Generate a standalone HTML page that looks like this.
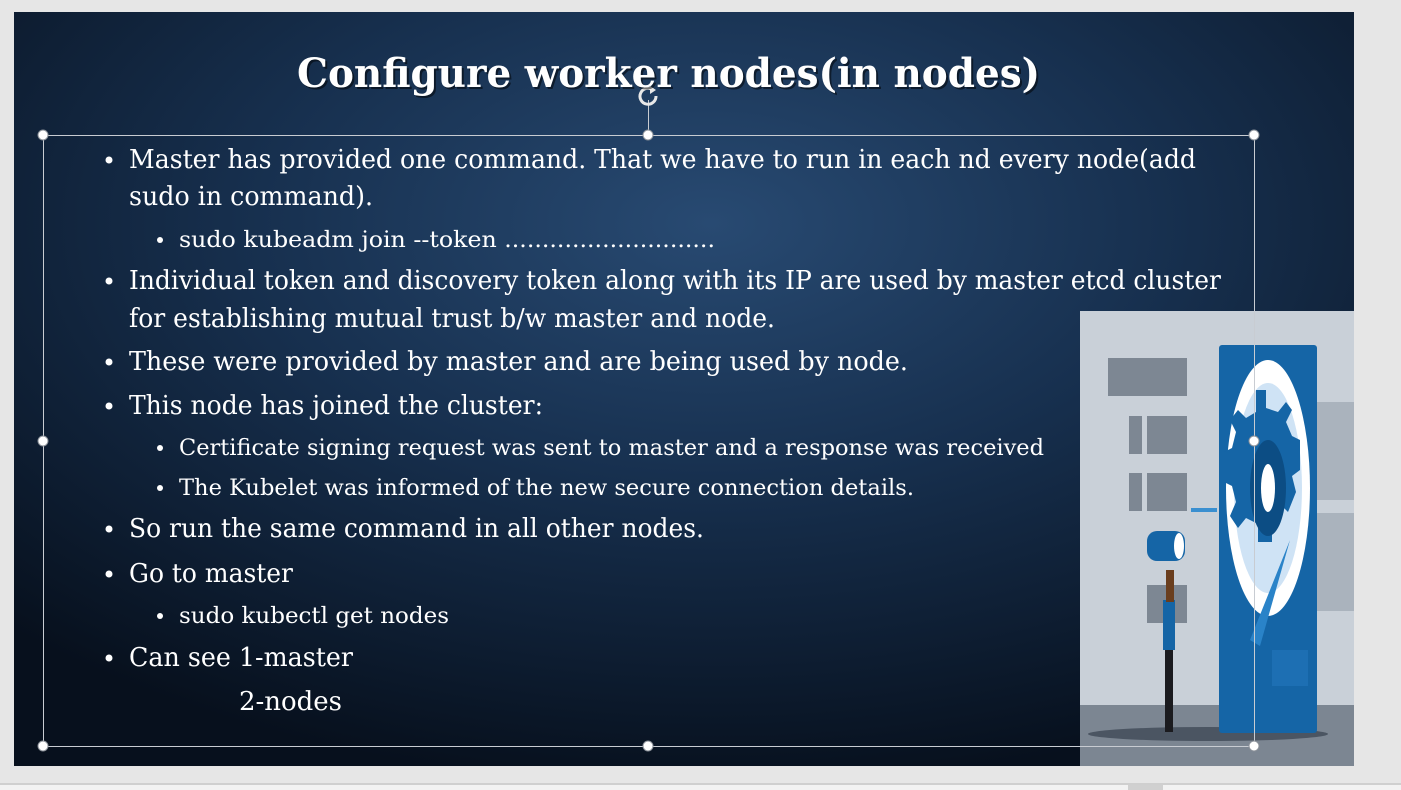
<!DOCTYPE html>
<html><head><meta charset="utf-8"><style>
html,body{margin:0;padding:0;width:1401px;height:790px;overflow:hidden;background:#e6e6e6;}
</style></head><body>
<svg width="1401" height="790" viewBox="0 0 1401 790" xmlns="http://www.w3.org/2000/svg" style="position:absolute;left:0;top:0">
<defs>
<radialGradient id="bg" cx="0.52" cy="0.28" r="0.75">
<stop offset="0" stop-color="#284a72"/>
<stop offset="0.45" stop-color="#17304f"/>
<stop offset="1" stop-color="#07101d"/>
</radialGradient>
</defs>
<rect x="0" y="0" width="1401" height="790" fill="#e6e6e6"/>
<rect x="0" y="783" width="1401" height="2" fill="#cfcfcf"/>
<rect x="0" y="785" width="1401" height="5" fill="#f2f2f2"/>
<rect x="1128" y="785" width="35" height="5" fill="#d0d0d0"/>
<rect x="14" y="12" width="1340" height="754" fill="url(#bg)"/>

<!-- illustration -->
<rect x="1080" y="311" width="274" height="455" fill="#c9d0d8"/>
<rect x="1080" y="705" width="274" height="61" fill="#7c8692"/>
<rect x="1108" y="358" width="79" height="38" fill="#7d8793"/>
<rect x="1129" y="416" width="13" height="38" fill="#7d8793"/>
<rect x="1147" y="416" width="40" height="38" fill="#7d8793"/>
<rect x="1129" y="473" width="13" height="38" fill="#7d8793"/>
<rect x="1147" y="473" width="40" height="38" fill="#7d8793"/>
<rect x="1147" y="585" width="40" height="38" fill="#7d8793"/>
<rect x="1316" y="402" width="38" height="98" fill="#aab3bd"/>
<rect x="1316" y="513" width="38" height="98" fill="#aab3bd"/>
<ellipse cx="1208" cy="734" rx="120" ry="7" fill="#4b5562"/>
<rect x="1219" y="345" width="98" height="388" rx="3" fill="#1565a6"/>
<ellipse cx="1268" cy="488" rx="42" ry="128" fill="#ffffff"/>
<ellipse cx="1268" cy="488" rx="34" ry="105" fill="#cfe3f5"/>
<path d="M1256 390 h10 v18 l12 4 l8 -10 l6 8 l-6 12 l6 14 l8 4 v30 l-8 6 l4 16 l-8 20 l-6 -6 l-10 18 v18 h-14 v-18 l-12 -6 l-8 10 l-8 -12 l6 -14 l-4 -16 l-8 -4 v-30 l8 -4 l4 -16 l-6 -12 l8 -10 l8 8 l10 -6 z" fill="#1565a6"/>
<ellipse cx="1268" cy="488" rx="18" ry="48" fill="#0c4d84"/>
<ellipse cx="1268" cy="488" rx="7" ry="24" fill="#ffffff"/>
<path d="M1290 540 l-40 100 l10 6 z" fill="#2a83c8"/>
<rect x="1272" y="650" width="36" height="36" fill="#1d6fb3"/>
<rect x="1191" y="508" width="26" height="4" fill="#3a8fd0"/>
<rect x="1147" y="531" width="38" height="30" rx="10" fill="#1565a6"/>
<ellipse cx="1179" cy="546" rx="5" ry="13" fill="#fff"/>
<rect x="1163" y="600" width="12" height="50" fill="#1565a6"/>
<rect x="1165" y="650" width="8" height="82" fill="#1b1b1f"/>
<rect x="1166" y="570" width="8" height="32" fill="#6a3e1e"/>

<!-- selection frame -->
<g stroke="#c8ccd2" stroke-width="1" fill="none">
<rect x="43.5" y="135.5" width="1211" height="611"/>
<line x1="648.5" y1="100" x2="648.5" y2="135"/>
</g>
<g fill="#ffffff" stroke="#8a9098" stroke-width="1">
<circle cx="43" cy="135" r="5"/><circle cx="648" cy="135" r="5"/><circle cx="1254" cy="135" r="5"/>
<circle cx="43" cy="441" r="5"/><circle cx="1254" cy="441" r="5"/>
<circle cx="43" cy="746" r="5"/><circle cx="648" cy="746" r="5"/><circle cx="1254" cy="746" r="5"/>
</g>
<path d="M656 96 a8 8 0 1 1 -3 -6" stroke="#e8e8e8" stroke-width="3" fill="none"/>
<path d="M650 86 l6 4 l-6 4 z" fill="#e8e8e8"/>

<g font-family="DejaVu Serif, serif" fill="#ffffff">
<text x="299" y="89" font-size="40" font-weight="bold" fill="#000" opacity="0.5" textLength="743" lengthAdjust="spacingAndGlyphs">Configure worker nodes(in nodes)</text>
<text x="297" y="87" font-size="40" font-weight="bold" textLength="743" lengthAdjust="spacingAndGlyphs">Configure worker nodes(in nodes)</text>
<g font-size="26">
<text x="129" y="168" textLength="1067" lengthAdjust="spacingAndGlyphs">Master has provided one command. That we have to run in each nd every node(add</text>
<text x="129" y="205" textLength="244" lengthAdjust="spacingAndGlyphs">sudo in command).</text>
<text x="129" y="289" textLength="1092" lengthAdjust="spacingAndGlyphs">Individual token and discovery token along with its IP are used by master etcd cluster</text>
<text x="129" y="327" textLength="646" lengthAdjust="spacingAndGlyphs">for establishing mutual trust b/w master and node.</text>
<text x="129" y="370" textLength="779" lengthAdjust="spacingAndGlyphs">These were provided by master and are being used by node.</text>
<text x="129" y="414" textLength="414" lengthAdjust="spacingAndGlyphs">This node has joined the cluster:</text>
<text x="129" y="537" textLength="575" lengthAdjust="spacingAndGlyphs">So run the same command in all other nodes.</text>
<text x="129" y="582" textLength="164" lengthAdjust="spacingAndGlyphs">Go to master</text>
<text x="129" y="666" textLength="224" lengthAdjust="spacingAndGlyphs">Can see 1-master</text>
<text x="239" y="710" textLength="103" lengthAdjust="spacingAndGlyphs">2-nodes</text>
</g>
<g font-size="22">
<text x="179" y="247" textLength="536" lengthAdjust="spacingAndGlyphs">sudo kubeadm join --token ............................</text>
<text x="179" y="455" textLength="865" lengthAdjust="spacingAndGlyphs">Certificate signing request was sent to master and a response was received</text>
<text x="179" y="495" textLength="735" lengthAdjust="spacingAndGlyphs">The Kubelet was informed of the new secure connection details.</text>
<text x="179" y="623" textLength="270" lengthAdjust="spacingAndGlyphs">sudo kubectl get nodes</text>
</g>
</g>
<g fill="#ffffff">
<circle cx="109" cy="160" r="3.5"/><circle cx="109" cy="281" r="3.5"/><circle cx="109" cy="362" r="3.5"/>
<circle cx="109" cy="406" r="3.5"/><circle cx="109" cy="529" r="3.5"/><circle cx="109" cy="574" r="3.5"/>
<circle cx="109" cy="658" r="3.5"/>
<circle cx="160" cy="240" r="3"/><circle cx="160" cy="448" r="3"/><circle cx="160" cy="488" r="3"/><circle cx="160" cy="616" r="3"/>
</g>
</svg>
</body></html>
